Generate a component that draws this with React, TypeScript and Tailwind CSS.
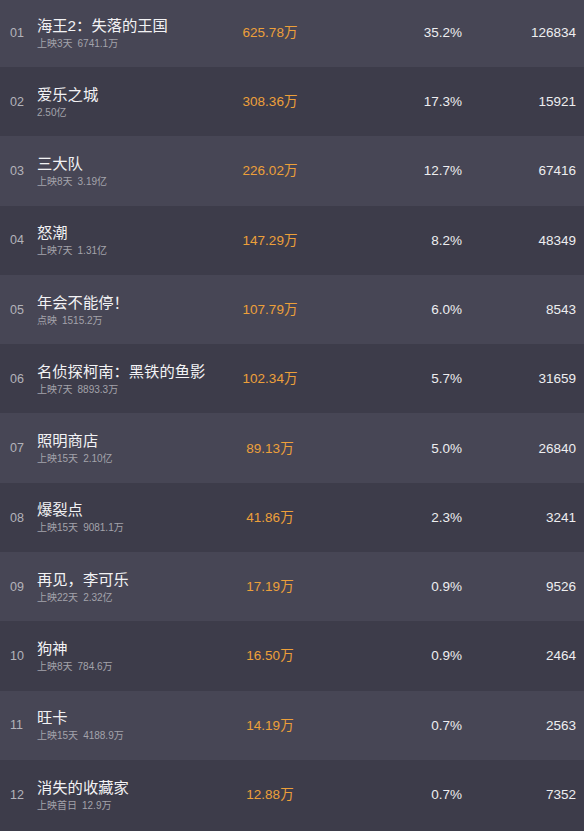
import React from "react";

type Row = { rank: string; title: string; sub1: string; sub2?: string; box: string; pct: string; count: string };

const rows: Row[] = [
  { rank: "01", title: "海王2：失落的王国", sub1: "上映3天", sub2: "6741.1万", box: "625.78万", pct: "35.2%", count: "126834" },
  { rank: "02", title: "爱乐之城", sub1: "2.50亿", box: "308.36万", pct: "17.3%", count: "15921" },
  { rank: "03", title: "三大队", sub1: "上映8天", sub2: "3.19亿", box: "226.02万", pct: "12.7%", count: "67416" },
  { rank: "04", title: "怒潮", sub1: "上映7天", sub2: "1.31亿", box: "147.29万", pct: "8.2%", count: "48349" },
  { rank: "05", title: "年会不能停！", sub1: "点映", sub2: "1515.2万", box: "107.79万", pct: "6.0%", count: "8543" },
  { rank: "06", title: "名侦探柯南：黑铁的鱼影", sub1: "上映7天", sub2: "8893.3万", box: "102.34万", pct: "5.7%", count: "31659" },
  { rank: "07", title: "照明商店", sub1: "上映15天", sub2: "2.10亿", box: "89.13万", pct: "5.0%", count: "26840" },
  { rank: "08", title: "爆裂点", sub1: "上映15天", sub2: "9081.1万", box: "41.86万", pct: "2.3%", count: "3241" },
  { rank: "09", title: "再见，李可乐", sub1: "上映22天", sub2: "2.32亿", box: "17.19万", pct: "0.9%", count: "9526" },
  { rank: "10", title: "狗神", sub1: "上映8天", sub2: "784.6万", box: "16.50万", pct: "0.9%", count: "2464" },
  { rank: "11", title: "旺卡", sub1: "上映15天", sub2: "4188.9万", box: "14.19万", pct: "0.7%", count: "2563" },
  { rank: "12", title: "消失的收藏家", sub1: "上映首日", sub2: "12.9万", box: "12.88万", pct: "0.7%", count: "7352" },
];

export default function App() {
  return (
    <div
      className="w-[584px] h-[831px] overflow-hidden bg-[#3d3c4a]"
      style={{ fontFamily: '"Liberation Sans", "Noto Sans CJK SC", sans-serif' }}
    >
      {rows.map((r, i) => (
        <div
          key={r.rank}
          className={`flex items-center ${i === 0 ? "h-[67px] pb-[1px]" : "h-[69.3px] pt-[1px]"} ${
            i % 2 === 0 ? "bg-[#474655]" : "bg-[#3d3c4a]"
          }`}
        >
          <div className="w-[37px] pl-[10px] text-[12.5px] text-[#b3b3ba]">{r.rank}</div>
          <div className="w-[183px] flex flex-col gap-px">
            <div className="text-[15.3px] leading-[20px] text-[#f2f2f4] whitespace-nowrap">{r.title}</div>
            <div className="text-[10px] leading-[14px] text-[#a3a3ab] whitespace-nowrap">
              <span>{r.sub1}</span>
              {r.sub2 && <span className="ml-[5px]">{r.sub2}</span>}
            </div>
          </div>
          <div className="w-[100px] text-center text-[13.5px] text-[#eda03a]">{r.box}</div>
          <div className="w-[142px] text-right text-[13.5px] text-[#eeeef0]">{r.pct}</div>
          <div className="w-[114px] text-right text-[13.5px] text-[#eeeef0]">{r.count}</div>
        </div>
      ))}
    </div>
  );
}
